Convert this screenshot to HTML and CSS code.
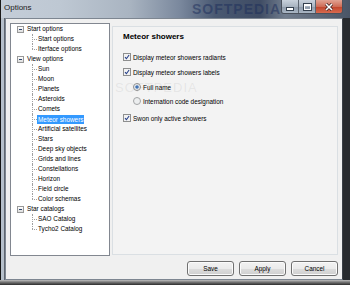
FILE: index.html
```html
<!DOCTYPE html>
<html lang="en">
<head>
    <meta charset="UTF-8">
    <meta name="viewport" content="width=device-width, initial-scale=1.0">
    <title>Options</title>
    <link rel="stylesheet" href="styles.css">
</head>
<body>
    <div class="window">
        <div class="titlebar">
            <span class="title">Options</span>
            <span class="title-mark">SOFTPEDIA</span>
            <div class="caption">
                <span class="cap-btn cap-min"><i></i></span>
                <span class="cap-btn cap-max"><i></i></span>
                <span class="cap-btn cap-close">
                    <svg width="10" height="8" viewBox="0 0 10 8">
                        <path d="M2 1l6 6M8 1l-6 6" stroke="#3a2020" stroke-width="3"/>
                        <path d="M2 1l6 6M8 1l-6 6" stroke="#fff" stroke-width="1.6"/>
                    </svg>
                </span>
            </div>
        </div>

        <div class="frame">
            <div class="client">
                <div class="main">
                    <!-- options tree -->
                    <div class="tree">
                        <div class="item root"><span class="expander"></span>Start options</div>
                        <div class="item child">Start options</div>
                        <div class="item child last">Iterface options</div>

                        <div class="item root"><span class="expander"></span>View options</div>
                        <div class="item child">Sun</div>
                        <div class="item child">Moon</div>
                        <div class="item child">Planets</div>
                        <div class="item child">Asteroids</div>
                        <div class="item child">Comets</div>
                        <div class="item child"><span class="selected">Meteor showers</span></div>
                        <div class="item child">Artificial satellites</div>
                        <div class="item child">Stars</div>
                        <div class="item child">Deep sky objects</div>
                        <div class="item child">Grids and lines</div>
                        <div class="item child">Constellations</div>
                        <div class="item child">Horizon</div>
                        <div class="item child">Field circle</div>
                        <div class="item child last">Color schemas</div>

                        <div class="item root"><span class="expander"></span>Star catalogs</div>
                        <div class="item child">SAO Catalog</div>
                        <div class="item child last">Tycho2 Catalog</div>
                    </div>

                    <!-- page for the selected node -->
                    <div class="panel">
                        <h2>Meteor showers</h2>

                        <div class="option first">
                            <svg class="box" width="8" height="8" viewBox="0 0 8 8">
                                <rect x=".5" y=".5" width="7" height="7" fill="#f2f2f2" stroke="#8e8f8f"/>
                                <path d="M2 4.2l1.4 1.5L6.1 2" fill="none" stroke="#26408a" stroke-width="1.1"/>
                            </svg>
                            <span>Display meteor showers radiants</span>
                        </div>
                        <div class="option">
                            <svg class="box" width="8" height="8" viewBox="0 0 8 8">
                                <rect x=".5" y=".5" width="7" height="7" fill="#f2f2f2" stroke="#8e8f8f"/>
                                <path d="M2 4.2l1.4 1.5L6.1 2" fill="none" stroke="#26408a" stroke-width="1.1"/>
                            </svg>
                            <span>Display meteor showers labels</span>
                        </div>
                        <div class="option sub">
                            <svg class="box" width="8" height="8" viewBox="0 0 8 8">
                                <circle cx="4" cy="4" r="3.5" fill="#eef0f2" stroke="#8e8f8f"/>
                                <circle cx="4" cy="4" r="1.8" fill="#3f72b8"/>
                            </svg>
                            <span>Full name</span>
                        </div>
                        <div class="option sub tight">
                            <svg class="box" width="8" height="8" viewBox="0 0 8 8">
                                <circle cx="4" cy="4" r="3.5" fill="#eceeef" stroke="#a2a4a6"/>
                            </svg>
                            <span>Internation code designation</span>
                        </div>
                        <div class="option spaced">
                            <svg class="box" width="8" height="8" viewBox="0 0 8 8">
                                <rect x=".5" y=".5" width="7" height="7" fill="#f2f2f2" stroke="#8e8f8f"/>
                                <path d="M2 4.2l1.4 1.5L6.1 2" fill="none" stroke="#26408a" stroke-width="1.1"/>
                            </svg>
                            <span>Swon only active showers</span>
                        </div>

                        <span class="watermark">SOFTPEDIA</span>
                    </div>
                </div>

                <div class="buttons">
                    <button type="button">Save</button>
                    <button type="button">Apply</button>
                    <button type="button">Cancel</button>
                </div>
            </div>
        </div>
    </div>
</body>
</html>
```

FILE: styles.css
```css
body {
    margin: 0;
    width: 350px;
    height: 285px;
    overflow: hidden;
    font-family: "Liberation Sans", Arial, sans-serif;
    font-size: 6.4px;
    background-color: #1d1f22;
}
.window {
    width: 350px;
    height: 285px;
    display: flex;
    flex-direction: column;
}

/* title bar */
.titlebar {
    position: relative;
    height: 18px;
    flex-shrink: 0;
    display: flex;
    align-items: flex-start;
    background: linear-gradient(to right, #c4cdd8 0, #bec8d3 60px, #a9b4c1 130px, #7a889d 180px, #4a5972 215px, #3f4c64 260px, #717d8e 285px, #4a5566 350px);
    box-shadow: inset 1px 0 0 #1a1a1a;
}
.title {
    margin: 3px 0 0 4px;
    font-size: 8px;
    line-height: 10px;
    color: #1b1b1b;
}
.title-mark {
    position: absolute;
    left: 192px;
    top: 1px;
    font-size: 14px;
    font-weight: bold;
    letter-spacing: 1px;
    color: rgba(26, 44, 90, 0.5);
}
.caption {
    display: flex;
    margin-left: auto;
    margin-right: 7px;
    height: 13px;
    border: 1px solid #4a515c;
    border-top: none;
    border-radius: 0 0 3px 3px;
    overflow: hidden;
}
.cap-btn {
    display: flex;
    align-items: center;
    justify-content: center;
    width: 16px;
    background: linear-gradient(#c9d2dc, #a9b4c1 50%, #8d99a8 51%, #a9b6c4);
    border-right: 1px solid #5d6570;
}
.cap-min i {
    width: 6px;
    height: 2px;
    margin-top: 4px;
    background: #fff;
    border: 1px solid #34404e;
}
.cap-max i {
    width: 5px;
    height: 3px;
    background: transparent;
    border: 1px solid #fff;
    border-top-width: 2px;
    outline: 1px solid #34404e;
}
.cap-close {
    width: 26px;
    border-right: none;
    background: linear-gradient(#e1a393, #cf6d57 50%, #c0432a 51%, #d86a4f);
}

/* glass frame around the client area */
.frame {
    flex: 1;
    display: flex;
    padding: 0 7px 5px 5px;
    background:
        linear-gradient(#bfbfbf, #7b7b7b 40%, #2c2c2c) bottom / 100% 5px no-repeat,
        linear-gradient(to right, #141414 0 1px, #b6c0cb 1px 4px, #5f6670 4px 5px, #272a2e 5px);
}
.client {
    flex: 1;
    display: flex;
    flex-direction: column;
    padding: 4px 4px 3px 4px;
    background-color: #f0f0f0;
    border: 1px solid #7d8691;
    border-right-color: #3a3f46;
}
.main {
    display: flex;
    gap: 2px;
    height: 233px;
}

/* tree */
.tree {
    width: 98px;
    border: 1px solid #828790;
    background-color: #fff;
    color: #000;
}
.item {
    position: relative;
    display: flex;
    align-items: center;
    height: 10px;
    line-height: 10px;
    white-space: nowrap;
}
.root {
    padding-left: 6px;
}
.expander {
    display: flex;
    align-items: center;
    justify-content: center;
    width: 5px;
    height: 5px;
    margin-right: 3px;
    border: 1px solid #989898;
    background: linear-gradient(#ffffff, #dcdcdc);
}
.expander::after {
    content: "";
    width: 3px;
    height: 1px;
    background-color: #2c4570;
}
.child {
    padding-left: 27px;
}
.child::before {
    content: "";
    position: absolute;
    left: 21px;
    top: 5px;
    width: 5px;
    border-top: 1px dotted #a0a0a0;
}
.child::after {
    content: "";
    position: absolute;
    left: 21px;
    top: 0;
    height: 10px;
    border-left: 1px dotted #a0a0a0;
}
.child.last::after {
    height: 5px;
}
.selected {
    margin-left: -1px;
    padding: 0 1px;
    line-height: 9px;
    background-color: #3399ff;
    color: #fff;
}

/* right hand page */
.panel {
    position: relative;
    flex: 1;
    margin: 3px 0 1px 0;
    padding: 5px 10px 0 10px;
    border: 1px solid #dadfe3;
    background-color: #f3f3f3;
    overflow: hidden;
}
.panel h2 {
    margin: 0;
    font-size: 8px;
    line-height: 10px;
    color: #000;
}
.option {
    display: flex;
    align-items: center;
    gap: 2px;
    height: 10px;
    margin-top: 5px;
    color: #000;
    white-space: nowrap;
}
.option.first {
    margin-top: 10px;
}
.option.sub {
    padding-left: 10px;
}
.option.tight {
    margin-top: 4px;
}
.option.spaced {
    margin-top: 7px;
}
.box {
    flex-shrink: 0;
}
.watermark {
    position: absolute;
    left: 2px;
    top: 53px;
    font-size: 13px;
    letter-spacing: 1px;
    color: rgba(140, 140, 140, 0.14);
    pointer-events: none;
}

/* dialog buttons */
.buttons {
    display: flex;
    justify-content: flex-end;
    gap: 5px;
    margin-top: 5px;
}
button {
    width: 47px;
    height: 15px;
    padding: 0;
    font-family: "Liberation Sans", Arial, sans-serif;
    font-size: 6.4px;
    color: #000;
    border: 1px solid #707070;
    border-radius: 3px;
    background: linear-gradient(#f2f2f2, #ebebeb 50%, #dddddd 51%, #cfcfcf);
    box-shadow: inset 0 0 0 1px #fbfbfb;
}
```
